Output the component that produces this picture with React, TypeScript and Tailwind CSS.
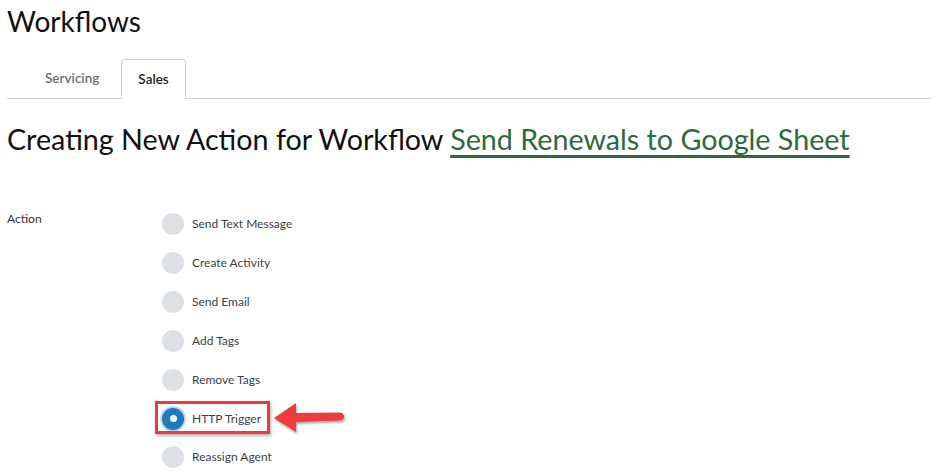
import React from "react";

const actions = [
  "Send Text Message",
  "Create Activity",
  "Send Email",
  "Add Tags",
  "Remove Tags",
  "HTTP Trigger",
  "Reassign Agent",
];

export default function App() {
  return (
    <div
      className="w-[937px] h-[473px] overflow-hidden bg-white text-[#1b1b1b] pl-[7px] pr-[6px]"
      style={{ fontFamily: "Lato, 'Noto Sans', sans-serif" }}
    >
      <h1 className="text-[28px] leading-[34px] pt-[4px] text-[#111]">Workflows</h1>
      <div className="mt-[21px] flex items-end border-b border-[#cfcfcf] h-[40px] pl-[22px] gap-[6px]">
        <div className="h-[39px] px-[16px] flex items-center text-[13.5px] font-semibold text-[#6b6f75]">
          Servicing
        </div>
        <div className="h-[40px] -mb-px px-[16px] flex items-center text-[13.5px] font-semibold text-[#222] bg-white border border-[#cfcfcf] border-b-white rounded-t-[4px]">
          Sales
        </div>
      </div>
      <h2 className="mt-[21px] text-[28.7px] leading-[38px] text-[#111] whitespace-nowrap">
        Creating New Action for Workflow{" "}
        <a className="text-[#2d6a3c] underline decoration-[3px] underline-offset-[5px] decoration-[#2d6a3c]">
          Send Renewals to Google Sheet
        </a>
      </h2>
      <div className="mt-[47px] flex">
        <div className="w-[155px] text-[12px] text-[#333] pt-[5px]">Action</div>
        <div className="flex flex-col">
          {actions.map((a) => {
            const sel = a === "HTTP Trigger";
            return (
              <div key={a} className="relative h-[38.83px] flex items-center gap-[8px]">
                {sel ? (
                  <div className="w-[22px] h-[22px] rounded-full bg-[#1f7bbd] ring-[2px] ring-[#bcd9ef] flex items-center justify-center">
                    <div className="w-[7px] h-[7px] rounded-full bg-white" />
                  </div>
                ) : (
                  <div className="w-[22px] h-[22px] rounded-full bg-[#dde1e6]" />
                )}
                <span className="text-[12px] text-[#3a3f4a]">{a}</span>
                {sel && (
                  <>
                    <div className="absolute left-[-7px] top-[2px] w-[115px] h-[33px] border-[3px] border-[#ee3a3f] shadow-[1px_2px_3px_rgba(0,0,0,0.3)]" />
                    <svg
                      className="absolute left-[110px] top-[2px]"
                      width="76"
                      height="34"
                      viewBox="0 0 76 34"
                    >
                      <defs>
                        <filter id="sh" x="-20%" y="-20%" width="140%" height="160%">
                          <feDropShadow dx="1" dy="2" stdDeviation="1.2" floodColor="#000" floodOpacity="0.35" />
                        </filter>
                      </defs>
                      <g filter="url(#sh)">
                        <path d="M2 17 L24 2 L24 12 L68 11.5 Q72 12 72 15.5 Q72 19 68 19.5 L24 21 L24 31 Z" fill="#ee3a3f" />
                      </g>
                    </svg>
                  </>
                )}
              </div>
            );
          })}
        </div>
      </div>
    </div>
  );
}
